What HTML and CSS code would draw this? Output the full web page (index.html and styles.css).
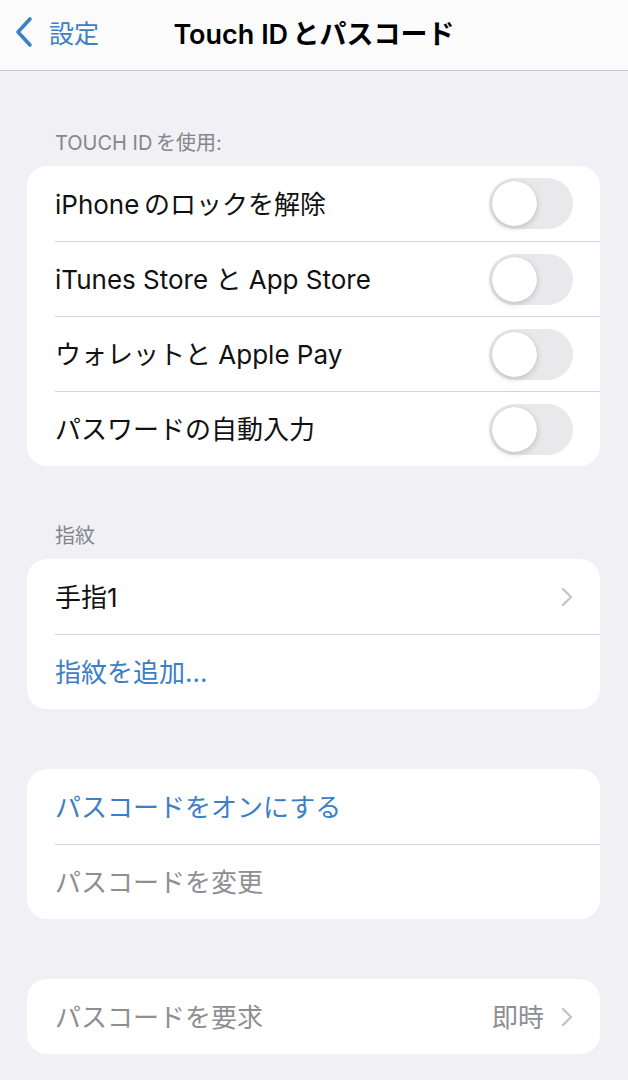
FILE: index.html
```html
<!doctype html>
<html lang="ja">

<head>
  <meta charset="utf-8">
  <title>Touch IDとパスコード</title>
  <meta name="viewport" content="width=device-width, initial-scale=1">
  <link rel="stylesheet" href="styles.css">
</head>

<body>
  <header class="nav-bar">
    <a href="#" class="back-link">
      <svg class="back-chevron" width="18" height="32" viewBox="0 0 18 32">
        <path d="M15 3 L3 16 L15 29" fill="none" stroke="#3b80c6" stroke-width="3.6" stroke-linecap="round" stroke-linejoin="round"/>
      </svg>
      <span>設定</span>
    </a>
    <h1 class="nav-title">Touch ID&thinsp;とパスコード</h1>
  </header>

  <main class="settings">
    <h2 class="group-title group-title-first">TOUCH ID&thinsp;を使用:</h2>
    <section class="card">
      <div class="row">
        <span class="label">iPhone&thinsp;のロックを解除</span>
        <span class="switch"><span class="knob"></span></span>
      </div>
      <div class="row">
        <span class="label">iTunes Store と App Store</span>
        <span class="switch"><span class="knob"></span></span>
      </div>
      <div class="row">
        <span class="label">ウォレットと Apple Pay</span>
        <span class="switch"><span class="knob"></span></span>
      </div>
      <div class="row">
        <span class="label">パスワードの自動入力</span>
        <span class="switch"><span class="knob"></span></span>
      </div>
    </section>

    <h2 class="group-title">指紋</h2>
    <section class="card">
      <div class="row">
        <span class="label">手指1</span>
        <svg class="chevron" width="14" height="22" viewBox="0 0 14 22">
          <path d="M3 3 L11 11 L3 19" fill="none" stroke="#c4c4c8" stroke-width="2.4" stroke-linecap="round" stroke-linejoin="round"/>
        </svg>
      </div>
      <div class="row">
        <span class="label link">指紋を追加...</span>
      </div>
    </section>

    <section class="card card-spaced">
      <div class="row">
        <span class="label link">パスコードをオンにする</span>
      </div>
      <div class="row">
        <span class="label muted">パスコードを変更</span>
      </div>
    </section>

    <section class="card card-spaced">
      <div class="row">
        <span class="label muted">パスコードを要求</span>
        <span class="detail">即時</span>
        <svg class="chevron" width="14" height="22" viewBox="0 0 14 22">
          <path d="M3 3 L11 11 L3 19" fill="none" stroke="#c4c4c8" stroke-width="2.4" stroke-linecap="round" stroke-linejoin="round"/>
        </svg>
      </div>
    </section>
  </main>
</body>

</html>
```

FILE: styles.css
```css
body {
  background: #f0f0f5;
  font-family: Inter, "Noto Sans CJK JP", sans-serif;
  margin: 0;
  color: #111;
}

.nav-bar {
  background: #fbfbfc;
  border-bottom: 1px solid #c9c9cc;
  height: 71px;
  box-sizing: border-box;
  padding-bottom: 6px;
  display: flex;
  align-items: center;
  justify-content: center;
  position: relative;
}

.back-link {
  position: absolute;
  left: 15px;
  top: 14px;
  display: flex;
  align-items: center;
  gap: 16px;
  color: #3b80c6;
  text-decoration: none;
  font-size: 25px;
}

.nav-title {
  margin: 0;
  font-size: 27px;
  font-weight: 600;
  color: #000;
}

.settings {
  padding: 0 28px 0 27px;
}

.group-title {
  margin: 0;
  padding: 59px 0 0 28px;
  height: 34px;
  font-size: 20px;
  font-weight: 400;
  line-height: 22px;
  color: #86868b;
}

.group-title-first {
  padding-top: 61px;
  height: 34px;
}

.card {
  background: #fff;
  border-radius: 20px;
  overflow: hidden;
}

.card-spaced {
  margin-top: 60px;
}

.row {
  height: 75px;
  margin-left: 28px;
  padding-right: 27px;
  display: flex;
  align-items: center;
  box-sizing: border-box;
}

.row + .row {
  border-top: 1px solid #d4d4d8;
}

.label {
  flex: 1;
  font-size: 26px;
  margin-top: -3px;
}

.link {
  color: #3b80c6;
}

.muted {
  color: #8e8e93;
}

.detail {
  font-size: 26px;
  margin-top: -3px;
  color: #8e8e93;
  margin-right: 16px;
}

.chevron {
  margin-right: -1px;
}

.switch {
  width: 84px;
  height: 51px;
  border-radius: 26px;
  background: #e9e9eb;
  position: relative;
}

.knob {
  position: absolute;
  left: 3px;
  top: 3px;
  width: 45px;
  height: 45px;
  border-radius: 50%;
  background: #fff;
  box-shadow: 0 2px 6px rgba(0, 0, 0, 0.18), 0 0 1px rgba(0, 0, 0, 0.15);
}
```
